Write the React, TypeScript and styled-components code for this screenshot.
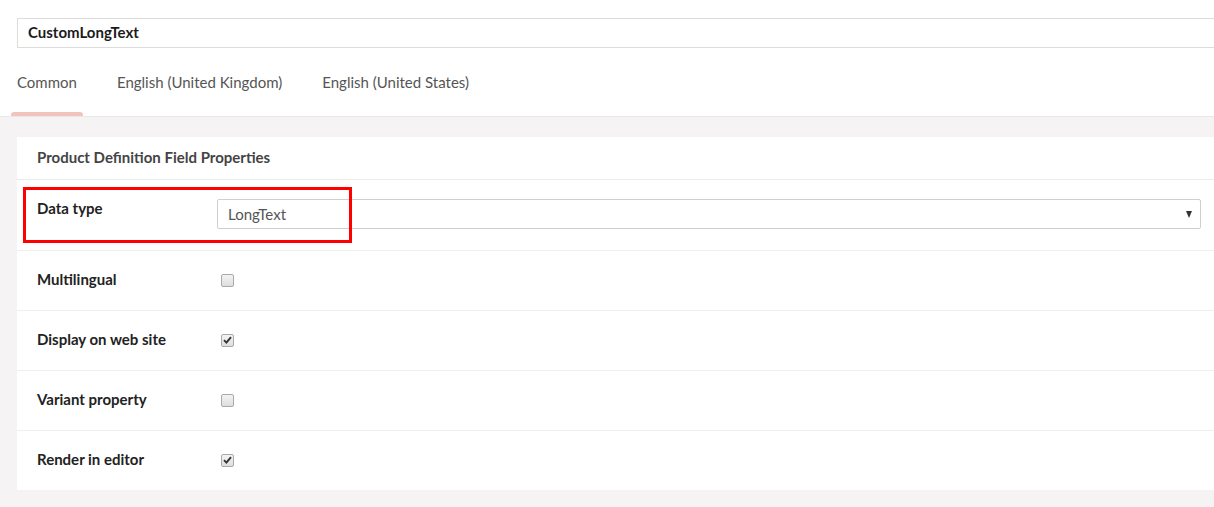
import React from "react";
import styled, { createGlobalStyle } from "styled-components";

const GlobalStyle = createGlobalStyle`
  html, body { margin: 0; padding: 0; background: #ffffff; }
  body { font-family: Lato, "Open Sans", "Liberation Sans", sans-serif; font-size: 15px; color: #333; }
  #root { overflow: hidden; width: 1214px; height: 507px; }
`;

const Page = styled.div`
  display: flex;
  flex-direction: column;
  width: 100%;
  height: 100%;
  padding-top: 18px;
  box-sizing: border-box;
`;

const NameInput = styled.div`
  margin-left: 17px;
  height: 30px;
  box-sizing: border-box;
  border: 1px solid #dcdcdc;
  border-right: none;
  display: flex;
  align-items: center;
  padding: 0 0 2px 10px;
  font-weight: 700;
  font-size: 15px;
  color: #1b1b1b;
`;

const Tabs = styled.div`
  display: flex;
  align-items: stretch;
  height: 68px;
  padding-left: 11px;
  gap: 28px;
`;

const Tab = styled.div<{ $active?: boolean }>`
  position: relative;
  display: flex;
  align-items: center;
  padding: 0 6px;
  color: #555555;
  font-size: 15px;
  &::after {
    content: "";
    position: absolute;
    left: 0;
    right: 0;
    bottom: 0;
    height: 4px;
    border-radius: 3px 3px 0 0;
    background: ${(p) => (p.$active ? "#f2c2bc" : "transparent")};
  }
`;

const Gray = styled.div`
  flex: 1;
  background: #f5f3f3;
  border-top: 1px solid #e9e7e7;
  padding: 20px 0 0 17px;
`;

const Panel = styled.div`
  background: #ffffff;
  display: flex;
  flex-direction: column;
`;

const PanelHeader = styled.div`
  height: 43px;
  box-sizing: border-box;
  padding: 0 0 2px 20px;
  display: flex;
  align-items: center;
  font-weight: 700;
  color: #444444;
  border-bottom: 1px solid #ebebeb;
`;

const Row = styled.div<{ $last?: boolean }>`
  position: relative;
  display: flex;
  align-items: flex-start;
  padding: 19px 13px 21px 20px;
  min-height: 19px;
  border-bottom: ${(p) => (p.$last ? "none" : "1px solid #efefef")};
`;

const Label = styled.div`
  width: 180px;
  flex: none;
  font-weight: 700;
  color: #222;
  line-height: 18px;
`;

const Select = styled.div`
  flex: 1;
  height: 30px;
  box-sizing: border-box;
  border: 1px solid #cfcfcf;
  border-radius: 2px;
  display: flex;
  align-items: center;
  justify-content: space-between;
  padding: 0 8px 0 10px;
  color: #555;
`;

const Arrow = styled.span`
  width: 0;
  height: 0;
  border-left: 3.5px solid transparent;
  border-right: 3.5px solid transparent;
  border-top: 7px solid #333;
`;

const CheckWrap = styled.div`
  display: flex;
  align-items: center;
  height: 19px;
  padding-top: 1px;
  box-sizing: border-box;
`;

const Check = styled.span`
  margin-left: 4px;
  width: 13px;
  height: 13px;
  box-sizing: border-box;
  border: 1px solid #a9a9a9;
  border-radius: 2px;
  background: linear-gradient(#f3f3f3, #dedede);
  display: flex;
  align-items: center;
  justify-content: center;
`;

const Highlight = styled.div`
  position: absolute;
  left: 6px;
  top: 7px;
  width: 329px;
  height: 56px;
  box-sizing: border-box;
  border: 3px solid #ff0000;
  pointer-events: none;
`;

const Checkbox = ({ checked }: { checked?: boolean }) => (
  <CheckWrap>
    <Check>
      {checked && (
        <svg width="9" height="8" viewBox="0 0 9 8">
          <path d="M1 4.2 L3.4 6.6 L8 1.2" fill="none" stroke="#333" strokeWidth="1.9" />
        </svg>
      )}
    </Check>
  </CheckWrap>
);

const rows: { label: string; checked: boolean }[] = [
  { label: "Multilingual", checked: false },
  { label: "Display on web site", checked: true },
  { label: "Variant property", checked: false },
  { label: "Render in editor", checked: true },
];

export default function App() {
  return (
    <>
      <GlobalStyle />
      <Page>
        <NameInput>CustomLongText</NameInput>
        <Tabs>
          <Tab $active>Common</Tab>
          <Tab>English (United Kingdom)</Tab>
          <Tab>English (United States)</Tab>
        </Tabs>
        <Gray>
          <Panel>
            <PanelHeader>Product Definition Field Properties</PanelHeader>
            <Row>
              <Label>Data type</Label>
              <Select>
                <span>LongText</span>
                <Arrow />
              </Select>
              <Highlight />
            </Row>
            {rows.map((r, i) => (
              <Row key={r.label} $last={i === rows.length - 1}>
                <Label>{r.label}</Label>
                <Checkbox checked={r.checked} />
              </Row>
            ))}
          </Panel>
        </Gray>
      </Page>
    </>
  );
}
